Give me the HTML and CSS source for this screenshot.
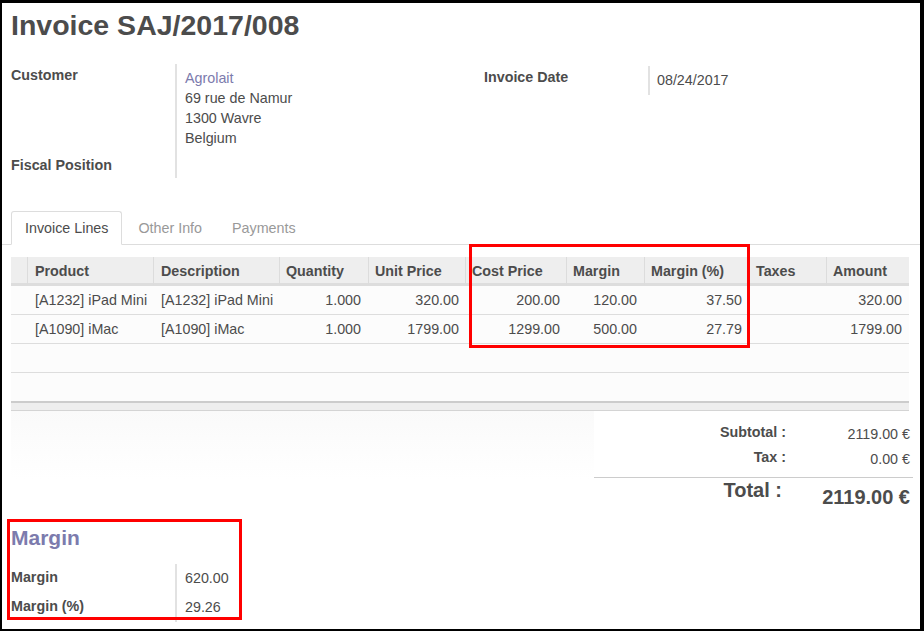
FILE: index.html
```html
<!DOCTYPE html>
<html>
<head>
<meta charset="utf-8">
<title>Invoice SAJ/2017/008</title>
<link rel="stylesheet" href="styles.css">
</head>
<body>
<div class="frame">
  <div class="sheet">
    <h1 class="title">Invoice SAJ/2017/008</h1>
    <div class="groups">
      <div class="group group-left">
        <div class="lbl">Customer</div>
        <div class="val val-addr">
          <a class="link">Agrolait</a><br>
          69 rue de Namur<br>
          1300 Wavre<br>
          Belgium
        </div>
        <div class="lbl lbl-last">Fiscal Position</div>
        <div class="val"></div>
      </div>
      <div class="group group-right">
        <div class="lbl">Invoice Date</div>
        <div class="val val-date">08/24/2017</div>
      </div>
    </div>
  </div>

  <div class="tabs">
    <span class="tab active">Invoice Lines</span>
    <span class="tab">Other Info</span>
    <span class="tab">Payments</span>
  </div>

  <div class="sheet">
    <table class="lines">
      <colgroup>
        <col class="c-sel"><col class="c-prod"><col class="c-desc"><col class="c-qty"><col class="c-unit"><col class="c-cost"><col class="c-margin"><col class="c-pct"><col class="c-tax"><col class="c-amt">
      </colgroup>
      <thead>
        <tr>
          <th></th>
          <th class="wide">Product</th>
          <th class="wide">Description</th>
          <th>Quantity</th>
          <th>Unit Price</th>
          <th>Cost Price</th>
          <th>Margin</th>
          <th>Margin (%)</th>
          <th class="no-sep">Taxes</th>
          <th>Amount</th>
        </tr>
      </thead>
      <tbody>
        <tr>
          <td></td>
          <td>[A1232] iPad Mini</td>
          <td>[A1232] iPad Mini</td>
          <td class="num">1.000</td>
          <td class="num tight">320.00</td>
          <td class="num tight">200.00</td>
          <td class="num">120.00</td>
          <td class="num">37.50</td>
          <td></td>
          <td class="num">320.00</td>
        </tr>
        <tr>
          <td></td>
          <td>[A1090] iMac</td>
          <td>[A1090] iMac</td>
          <td class="num">1.000</td>
          <td class="num tight">1799.00</td>
          <td class="num tight">1299.00</td>
          <td class="num">500.00</td>
          <td class="num">27.79</td>
          <td></td>
          <td class="num">1799.00</td>
        </tr>
        <tr class="empty"><td colspan="10"></td></tr>
        <tr class="empty last"><td colspan="10"></td></tr>
      </tbody>
      <tfoot>
        <tr><td colspan="10"></td></tr>
      </tfoot>
    </table>

    <div class="bottom">
      <div class="note"></div>
      <div class="totals">
        <div class="t-lbl">Subtotal :</div>
        <div class="t-val">2119.00 €</div>
        <div class="t-lbl">Tax :</div>
        <div class="t-val">0.00 €</div>
        <div class="t-lbl t-total">Total :</div>
        <div class="t-val t-total-val">2119.00 €</div>
      </div>
    </div>

    <h2 class="sep-title">Margin</h2>
    <div class="group group-margin">
      <div class="lbl">Margin</div>
      <div class="val">620.00</div>
      <div class="lbl">Margin (%)</div>
      <div class="val">29.26</div>
    </div>
  </div>

  <div class="highlight hl-cols"></div>
  <div class="highlight hl-margin"></div>
</div>
</body>
</html>
```

FILE: styles.css
```css
html, body {
  margin: 0;
  padding: 0;
  background: #000;
}

body {
  font-family: "Liberation Sans", Arial, sans-serif;
  font-size: 14.3px;
  line-height: 20px;
  color: #4c4c4c;
}

.frame {
  position: relative;
  margin: 3px 4px 2px 2px;
  height: 626px;
  background: #fff;
  overflow: hidden;
}

.sheet {
  padding: 0 0 0 9px;
}

.title {
  margin: 0;
  padding-top: 6px;
  font-size: 28.5px;
  line-height: 32px;
  font-weight: bold;
  color: #4c4c4c;
}

.groups {
  display: flex;
  margin-top: 23px;
}

.group {
  display: grid;
  grid-template-columns: 164px 1fr;
}

.group-left {
  width: 473px;
  flex: 0 0 473px;
}

.group-right {
  flex: 1;
  margin-top: 2px;
  align-self: flex-start;
}

.lbl {
  font-weight: bold;
  padding-top: 1px;
  padding-bottom: 6px;
}

.lbl-last {
  padding-bottom: 3px;
}

.val {
  border-left: 2px solid #e2e2e2;
  padding: 4px 0 0 8px;
}

.val-addr {
  padding-bottom: 6px;
}

.val-date {
  padding-left: 7px;
  padding-bottom: 5px;
}

.link {
  color: #7c7bad;
  text-decoration: none;
}

/* tabs */
.tabs {
  display: flex;
  margin-top: 33px;
  padding-left: 9px;
  border-bottom: 1px solid #ddd;
}

.tab {
  padding: 6px 13px;
  border: 1px solid transparent;
  border-radius: 3px 3px 0 0;
  margin-bottom: -1px;
  margin-right: 2px;
  color: #999;
}

.tab.active {
  color: #4c4c4c;
  border-color: #ddd #ddd #fff;
  background: #fff;
}

/* lines table */
.lines {
  margin-top: 12px;
  width: 898px;
  table-layout: fixed;
  border-collapse: separate;
  border-spacing: 0;
}

.c-sel { width: 16px; }
.c-prod { width: 126px; }
.c-desc { width: 126px; }
.c-qty { width: 89px; }
.c-unit { width: 97px; }
.c-cost { width: 101px; }
.c-margin { width: 78px; }
.c-pct { width: 105px; }
.c-tax { width: 77px; }
.c-amt { width: 83px; }

.lines th {
  background: #eee;
  text-align: left;
  font-weight: bold;
  padding: 4px 0 2px 6px;
  border-left: 1px solid #dcdcdc;
  border-bottom: 3px solid #ddd;
  white-space: nowrap;
  overflow: hidden;
}

.lines th.wide {
  padding-left: 7px;
}

.lines th:first-child {
  border-left: none;
}

.lines th.no-sep {
  border-left-color: #eee;
}

.lines td {
  padding: 4px 7px 4px 7px;
  height: 20px;
  border-bottom: 1px solid #ddd;
  white-space: nowrap;
  overflow: hidden;
  background: #fcfcfc;
}

.lines td:nth-child(2),
.lines td:nth-child(3) {
  padding-left: 8px;
  padding-right: 0;
}

.lines td.num {
  text-align: right;
}

.lines td.tight {
  padding-right: 6px;
}

.lines tr.empty.last td {
  border-bottom: none;
}

.lines tfoot td {
  height: 7px;
  padding: 0;
  background: #eee;
  border-top: 2px solid #ccc;
  border-bottom: 1px solid #d4d4d4;
}

/* totals */
.bottom {
  display: flex;
  width: 902px;
}

.note {
  flex: 1;
  height: 68px;
  background: linear-gradient(#fafafa, #fdfdfd 60%, #fff);
}

.totals {
  width: 316px;
  padding: 11px 3px 0 0;
  display: grid;
  grid-template-columns: 192px 124px;
}

.t-lbl {
  font-weight: bold;
  text-align: right;
  height: 25px;
}

.t-val {
  text-align: right;
  padding-top: 2px;
  height: 23px;
}

.t-total {
  margin-top: 5px;
  border-top: 1px solid #ccc;
  font-size: 20px;
  line-height: 20px;
  padding-top: 2px;
  padding-right: 4px;
  height: 25px;
}

.t-total-val {
  margin-top: 5px;
  border-top: 1px solid #ccc;
  font-size: 20px;
  line-height: 20px;
  font-weight: bold;
  padding-top: 9px;
  height: 18px;
  margin-right: -3px;
  padding-right: 3px;
}

/* margin section */
.sep-title {
  margin: 21px 0 0 0;
  font-size: 21px;
  line-height: 24px;
  font-weight: bold;
  color: #7c7bad;
}

.group-margin {
  margin-top: 14px;
  width: 473px;
}

.group-margin .lbl {
  padding-top: 3px;
  padding-bottom: 6px;
}

.group-margin .val {
  padding-top: 4px;
  padding-bottom: 5px;
}

/* annotation boxes */
.highlight {
  position: absolute;
  border: 3px solid #f00;
  box-sizing: border-box;
}

.hl-cols {
  left: 467px;
  top: 241px;
  width: 281px;
  height: 104px;
}

.hl-margin {
  left: 5px;
  top: 516px;
  width: 235px;
  height: 101px;
}
```
